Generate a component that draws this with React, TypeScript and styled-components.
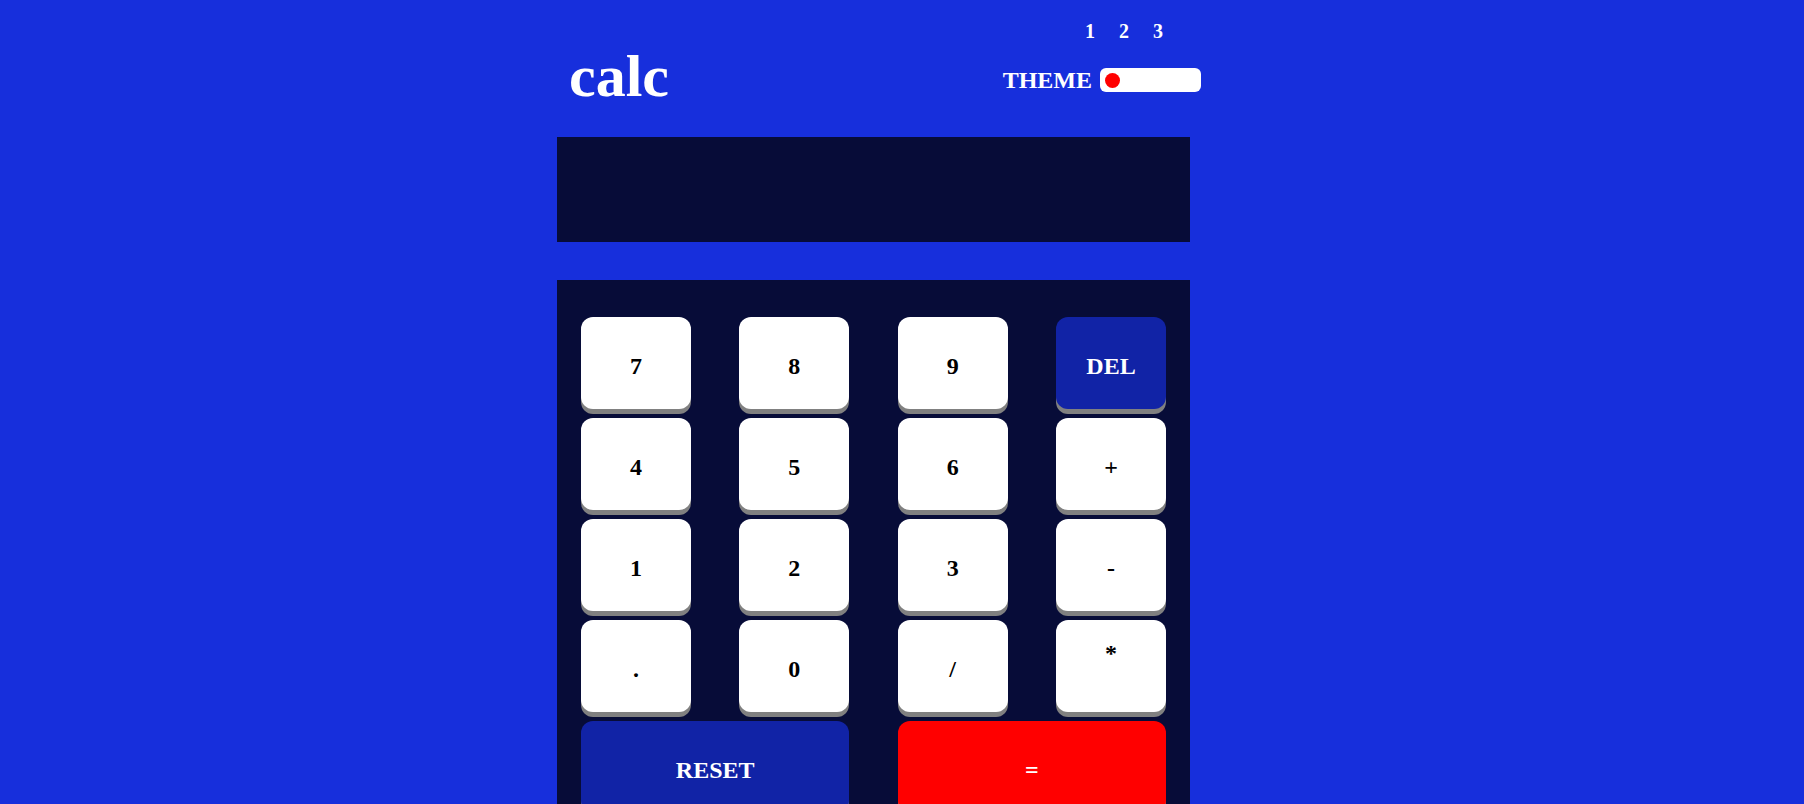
import styled, { createGlobalStyle } from "styled-components";

const GlobalStyle = createGlobalStyle`
  html,
  body {
    margin: 0;
    background: #172fdc;
    font-family: "Liberation Serif", "Times New Roman", serif;
  }
`;

const Page = styled.div`
  padding-left: 557px;
  padding-bottom: 40px;
`;

const Calculator = styled.main`
  width: 633px;
`;

const Header = styled.header`
  height: 137px;
  display: flex;
  justify-content: space-between;
  align-items: flex-start;
  padding-left: 12px;
  margin-right: -11px;
  color: #fff;
`;

const Logo = styled.h1`
  margin: 46px 0 0;
  font-size: 60px;
  line-height: 1;
  font-weight: bold;
`;

const ThemeBox = styled.div`
  display: flex;
  flex-direction: column;
  align-items: flex-end;
`;

const Numbers = styled.div`
  display: flex;
  gap: 24px;
  margin: 21px 38px 0 0;
  font-size: 20px;
  line-height: 20px;
  font-weight: bold;
`;

const ThemeRow = styled.div`
  display: flex;
  align-items: center;
  gap: 8px;
  margin-top: 27px;
`;

const ThemeLabel = styled.span`
  font-size: 24px;
  line-height: 24px;
  font-weight: bold;
`;

const Toggle = styled.div`
  width: 101px;
  height: 24px;
  box-sizing: border-box;
  padding: 0 5px;
  display: flex;
  align-items: center;
  background: #fff;
  border-radius: 6px;
`;

const Dot = styled.span`
  width: 15px;
  height: 15px;
  border-radius: 50%;
  background: #ff0000;
`;

const Display = styled.section`
  height: 105px;
  margin-bottom: 38px;
  background: #070c38;
`;

const Keypad = styled.section`
  display: grid;
  grid-template-columns: repeat(4, 110px);
  grid-auto-rows: 92px;
  justify-content: space-between;
  row-gap: 9px;
  padding: 37px 24px;
  background: #070c38;
`;

type Variant = "plain" | "dark" | "red";

const keyColors: Record<Variant, string> = {
  plain: "#ffffff",
  dark: "#1123a6",
  red: "#ff0000",
};

const Key = styled.button<{ $variant?: Variant; $wide?: boolean; $lift?: boolean }>`
  grid-column: ${(p) => (p.$wide ? "span 2" : "span 1")};
  border: none;
  border-radius: 12px;
  padding: 6px 0 ${(p) => (p.$lift ? "32px" : "0")};
  background: ${(p) => keyColors[p.$variant ?? "plain"]};
  color: ${(p) => (p.$variant && p.$variant !== "plain" ? "#fff" : "#000")};
  box-shadow: 0 5px 0 #808080;
  font-family: "Liberation Serif", "Times New Roman", serif;
  font-size: 24px;
  font-weight: bold;
  cursor: pointer;
`;

const keys: { label: string; variant?: Variant; lift?: boolean }[] = [
  { label: "7" },
  { label: "8" },
  { label: "9" },
  { label: "DEL", variant: "dark" },
  { label: "4" },
  { label: "5" },
  { label: "6" },
  { label: "+" },
  { label: "1" },
  { label: "2" },
  { label: "3" },
  { label: "-" },
  { label: "." },
  { label: "0" },
  { label: "/" },
  { label: "*", lift: true },
];

export default function App() {
  return (
    <>
      <GlobalStyle />
      <Page>
        <Calculator>
          <Header>
            <Logo>calc</Logo>
            <ThemeBox>
              <Numbers>
                <span>1</span>
                <span>2</span>
                <span>3</span>
              </Numbers>
              <ThemeRow>
                <ThemeLabel>THEME</ThemeLabel>
                <Toggle>
                  <Dot />
                </Toggle>
              </ThemeRow>
            </ThemeBox>
          </Header>
          <Display />
          <Keypad>
            {keys.map((k) => (
              <Key key={k.label} $variant={k.variant} $lift={k.lift}>
                {k.label}
              </Key>
            ))}
            <Key $variant="dark" $wide>
              RESET
            </Key>
            <Key $variant="red" $wide>
              =
            </Key>
          </Keypad>
        </Calculator>
      </Page>
    </>
  );
}
